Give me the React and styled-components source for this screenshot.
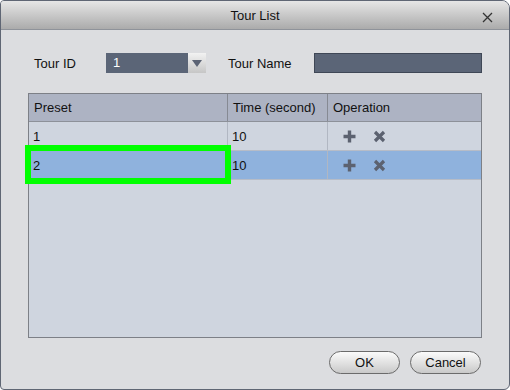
import React from "react";
import styled, { createGlobalStyle } from "styled-components";

const GlobalStyle = createGlobalStyle`
  html, body {
    margin: 0;
    padding: 0;
    background: #ffffff;
  }
  body {
    font-family: "Liberation Sans", Arial, sans-serif;
  }
`;

const rows = [
  { preset: "1", time: "10" },
  { preset: "2", time: "10", selected: true },
];

const PlusIcon = () => (
  <svg width="15" height="15" viewBox="0 0 15 15">
    <path d="M7.5 1.5v12M1.5 7.5h12" stroke="#5c6270" strokeWidth="3.4" />
  </svg>
);

const CrossIcon = () => (
  <svg width="13" height="13" viewBox="0 0 13 13">
    <path d="M2 2l9 9M11 2l-9 9" stroke="#5c6270" strokeWidth="3.2" />
  </svg>
);

export default function App() {
  return (
    <>
      <GlobalStyle />
      <Dialog>
        <TitleBar>
          <Title>Tour List</Title>
          <Close>
            <svg width="11" height="11" viewBox="0 0 11 11">
              <path d="M1 1l9 9M10 1l-9 9" stroke="#333" strokeWidth="1.3" />
            </svg>
          </Close>
        </TitleBar>
        <Body>
          <FormRow>
            <Label width="72px">Tour ID</Label>
            <Select>
              <SelectValue>1</SelectValue>
              <SelectArrow>
                <svg width="10" height="7" viewBox="0 0 10 7">
                  <path d="M0 0h10L5 7z" fill="#5b6374" />
                </svg>
              </SelectArrow>
            </Select>
            <Label width="86px" gap="22px">Tour Name</Label>
            <TextBox />
          </FormRow>

          <Table>
            <HeaderRow>
              <HeadCell>Preset</HeadCell>
              <HeadCell>Time (second)</HeadCell>
              <HeadCell last>Operation</HeadCell>
            </HeaderRow>
            {rows.map((r, i) => (
              <Row key={i} selected={r.selected}>
                <Cell>{r.preset}</Cell>
                <Cell>{r.time}</Cell>
                <OpCell>
                  <PlusIcon />
                  <CrossIcon />
                </OpCell>
              </Row>
            ))}
            <Highlight />
          </Table>

          <Footer>
            <Button>OK</Button>
            <Button>Cancel</Button>
          </Footer>
        </Body>
      </Dialog>
    </>
  );
}

const Dialog = styled.div`
  width: 510px;
  height: 390px;
  box-sizing: border-box;
  border: 1px solid #5f6674;
  border-radius: 4px 8px 6px 4px;
  background: #dcdde0;
  display: flex;
  flex-direction: column;
  overflow: hidden;
`;

const TitleBar = styled.div`
  height: 28px;
  flex-shrink: 0;
  position: relative;
  display: flex;
  align-items: center;
  justify-content: center;
  background: linear-gradient(#e6e6e6, #ababab);
  border-bottom: 1px solid #8f939a;
`;

const Title = styled.div`
  font-size: 13px;
  color: #111;
  padding-top: 1px;
`;

const Close = styled.div`
  position: absolute;
  right: 16px;
  top: 11px;
  width: 11px;
  height: 11px;
  display: flex;
`;

const Body = styled.div`
  flex: 1;
  display: flex;
  flex-direction: column;
  padding: 23px 27px 0 27px;
`;

const FormRow = styled.div`
  display: flex;
  align-items: center;
  height: 20px;
  padding-left: 6px;
`;

const Label = styled.div`
  width: ${({ width }) => width};
  margin-left: ${({ gap }) => gap || "0"};
  font-size: 13px;
  color: #111;
`;

const Select = styled.div`
  width: 100px;
  height: 20px;
  display: flex;
  background: #5b6577;
`;

const SelectValue = styled.div`
  flex: 1;
  color: #fff;
  font-size: 13px;
  line-height: 20px;
  padding-left: 7px;
`;

const SelectArrow = styled.div`
  width: 18px;
  display: flex;
  align-items: center;
  justify-content: center;
  background: linear-gradient(#f2f2f2, #c6c6c6);
`;

const TextBox = styled.div`
  width: 168px;
  height: 20px;
  box-sizing: border-box;
  border: 1px solid #3f4756;
  background: #5b6577;
`;

const Table = styled.div`
  position: relative;
  margin-top: 20px;
  height: 245px;
  box-sizing: border-box;
  border: 1px solid #7d8087;
  background: #cfd5df;
`;

const HeaderRow = styled.div`
  display: grid;
  grid-template-columns: 199px 100px 1fr;
  height: 27px;
  background: #adb3c3;
  border-bottom: 1px solid #8d9199;
`;

const HeadCell = styled.div`
  display: flex;
  align-items: center;
  padding-left: 5px;
  font-size: 13px;
  color: #111;
  border-right: ${({ last }) => (last ? "none" : "1px solid #868a93")};
`;

const Row = styled.div`
  display: grid;
  grid-template-columns: 199px 100px 1fr;
  height: 28px;
  background: ${({ selected }) => (selected ? "#8fb2dd" : "#cfd5df")};
  border-bottom: 1px solid #b6bcc7;
`;

const Cell = styled.div`
  display: flex;
  align-items: center;
  padding-left: 4px;
  font-size: 13px;
  color: #111;
  border-right: 1px solid #b1b7c2;
`;

const OpCell = styled.div`
  display: flex;
  align-items: center;
  gap: 16px;
  padding-left: 14px;
`;

const Highlight = styled.div`
  position: absolute;
  left: -4px;
  top: 51px;
  width: 206px;
  height: 39px;
  box-sizing: border-box;
  border: 6px solid #00ff00;
`;

const Footer = styled.div`
  display: flex;
  justify-content: flex-end;
  gap: 10px;
  margin-top: 13px;
  padding-right: 1px;
`;

const Button = styled.div`
  width: 71px;
  height: 23px;
  box-sizing: border-box;
  border: 1px solid #6b6b6b;
  border-radius: 12px;
  background: linear-gradient(#fbfbfb, #c9c9c9);
  display: flex;
  align-items: center;
  justify-content: center;
  font-size: 13px;
  color: #111;
`;
